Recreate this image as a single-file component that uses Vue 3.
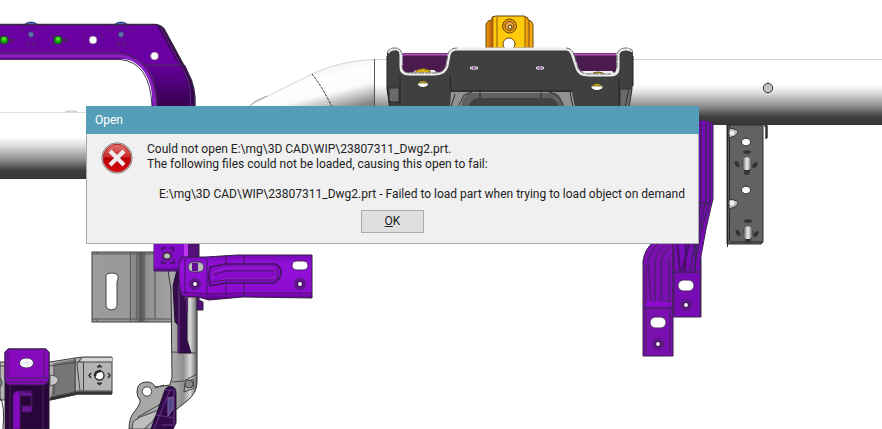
<script setup>
import { ref } from 'vue'

const open = ref(true)
const file = 'E:\\mg\\3D CAD\\WIP\\23807311_Dwg2.prt'
</script>

<template>
  <main class="viewport">
    <svg class="model" viewBox="0 0 882 429" preserveAspectRatio="xMinYMin slice" aria-hidden="true">
      <defs>
        <linearGradient id="pipe" x1="0" y1="0" x2="0" y2="1">
          <stop offset="0" stop-color="#fff" />
          <stop offset=".38" stop-color="#fff" />
          <stop offset=".5" stop-color="#dedede" />
          <stop offset=".7" stop-color="#929292" />
          <stop offset=".87" stop-color="#404040" />
          <stop offset="1" stop-color="#363636" />
        </linearGradient>
        <linearGradient id="bend" gradientUnits="userSpaceOnUse" x1="345" y1="66" x2="361" y2="128">
          <stop offset="0" stop-color="#f8f8f8" />
          <stop offset=".12" stop-color="#fff" />
          <stop offset=".35" stop-color="#fbfbfb" />
          <stop offset=".65" stop-color="#8a8a8a" />
          <stop offset="1" stop-color="#444" />
        </linearGradient>
        <linearGradient id="tube" x1="0" y1="0" x2="1" y2="0">
          <stop offset="0" stop-color="#a5a5a5" />
          <stop offset=".65" stop-color="#aaa" />
          <stop offset=".8" stop-color="#909090" />
          <stop offset=".9" stop-color="#d8d8d8" />
          <stop offset="1" stop-color="#666" />
        </linearGradient>
        <linearGradient id="plate" x1="0" y1="0" x2="1" y2="0">
          <stop offset="0" stop-color="#9b9b9b" />
          <stop offset=".45" stop-color="#999" />
          <stop offset=".57" stop-color="#818181" />
          <stop offset=".61" stop-color="#525252" />
          <stop offset=".68" stop-color="#919191" />
          <stop offset="1" stop-color="#a4a4a4" />
        </linearGradient>
        <linearGradient id="leg" x1="0" y1="0" x2="0" y2="1">
          <stop offset="0" stop-color="#65009a" />
          <stop offset="1" stop-color="#35004d" />
        </linearGradient>
        <linearGradient id="arm" x1="0" y1="0" x2="0" y2="1">
          <stop offset="0" stop-color="#740bb5" />
          <stop offset=".2" stop-color="#9310d8" />
          <stop offset=".85" stop-color="#8c0bd0" />
          <stop offset="1" stop-color="#480069" />
        </linearGradient>
        <linearGradient id="orange" x1="0" y1="0" x2="1" y2="0">
          <stop offset="0" stop-color="#f2a20b" />
          <stop offset=".13" stop-color="#bd5b11" />
          <stop offset=".18" stop-color="#ffc90b" />
          <stop offset=".8" stop-color="#ffcb0d" />
          <stop offset=".9" stop-color="#e58d0b" />
          <stop offset="1" stop-color="#ffba10" />
        </linearGradient>
        <linearGradient id="stud" x1="0" y1="0" x2="1" y2="0">
          <stop offset="0" stop-color="#777" />
          <stop offset=".5" stop-color="#eee" />
          <stop offset="1" stop-color="#777" />
        </linearGradient>
        <g id="countersink">
          <circle r="5.5" fill="#7110a4" stroke="#4a2368" />
          <circle r="3.6" fill="#48155e" />
          <circle r="1.9" fill="#fff" />
        </g>
        <g id="stud-mount">
          <ellipse cx="0" cy="-16" rx="4" ry="1.8" fill="#333" />
          <ellipse cx="-10" cy="-4" rx="2" ry="3.4" transform="rotate(-32 -10 -4)" fill="#333" />
          <ellipse cx="8" cy="-3" rx="2" ry="3.4" transform="rotate(38 8 -3)" fill="#333" />
          <circle cy="-5" r="5.5" fill="#4d4d4d" />
          <rect x="-4" y="-11" width="8" height="14" rx="3" fill="url(#stud)" stroke="#555" stroke-width=".6" />
          <rect x="-3" y="2" width="6" height="5" rx="2" fill="#3b3b3b" />
          <path d="M-3 2Q0 5 4 1" fill="none" stroke="#222" />
        </g>
      </defs>

      <!-- cross-car beam -->
      <rect x="0" y="112" width="240" height="67" fill="url(#pipe)" />
      <path d="M0 112.500H86" fill="none" stroke="#ddd" />
      <path d="M65 112L69 111H74L77 112" fill="none" stroke="#bbb" />
      <path d="M246 108L264 98L314 73Q345 59 382 59V125H246Z" fill="url(#bend)" />
      <path d="M246 108L264 98L314 73Q345 59 382 59.500H882" fill="none" stroke="#d4d4d4" />
      <path d="M250 106L254 102L267 96" fill="none" stroke="#888" stroke-width=".8" />
      <path d="M312 74Q323 88 332 107" fill="none" stroke="#333" stroke-dasharray="3 1" />
      <rect x="374" y="60" width="508" height="65" fill="url(#pipe)" />
      <path d="M374.500 59V110" stroke="#555" />
      <circle cx="768" cy="88" r="4.700" fill="#c2c2c2" stroke="#333" />

      <!-- upper left purple frame -->
      <path d="M0 24H155Q161 25 164 29L188 73Q196 87 195 107H152Q154 75 137 63Q131 59 120 59H0Z" fill="#6b00a2" />
      <path d="M148 65H185Q193 79 191 107H154Q156 79 148 65Z" fill="url(#leg)" />
      <path d="M157 25Q162 26 166 32L188 73Q196 87 194 107H188Q190 86 183 72L160 31Z" fill="#35074d" />
      <path d="M161 28L185 73Q192 87 190 107" fill="none" stroke="#74229b" />
      <path d="M0 24.500H155Q161 25 164 29L188 73Q196 87 195 107" fill="none" stroke="#372842" stroke-width="1.500" />
      <path d="M0 56H121Q153 61 155 106" fill="none" stroke="#8a22bd" stroke-width="3" />
      <path d="M0 53H121Q157 59 157 106M0 59.500H120Q150 62 152 106M145 65H180" fill="none" stroke="#443053" />
      <g v-for="x in [31, 121]" :key="x">
        <path :d="`M${x - 6} 24Q${x} 20 ${x + 6} 24`" fill="#5063ad" stroke="#293c77" />
        <path :d="`M${x - 10} 32Q${x} 17 ${x + 10} 32M${x - 5} 43H${x + 5}M${x - 4} 46H${x + 4}`" fill="none" stroke="#513061" stroke-dasharray="4 2" />
        <circle :cx="x" cy="34.500" r="2.800" fill="#626fb6" stroke="#42366f" />
      </g>
      <g v-for="x in [4, 58]" :key="x">
        <path :d="`M${x - 6} 35L${x - 2} 38M${x - 6} 44L${x - 2} 42M${x + 5} 39L${x + 9} 40L${x + 5} 42`" stroke="#532061" fill="none" stroke-width="2" />
        <circle :cx="x" cy="40" r="4" fill="#14a20c" stroke="#174d19" />
        <circle :cx="x" cy="39" r="2" fill="#52dc2b" />
      </g>
      <circle cx="93" cy="40" r="4" fill="#fff" stroke="#604172" stroke-width=".6" />
      <circle cx="154.500" cy="56" r="4" fill="#fff" stroke="#604172" stroke-width=".6" />
      <path d="M84 36V44M102 36V43" stroke="#532061" stroke-dasharray="3 2" />

      <!-- yellow clip and central bracket -->
      <path d="M486 48V25Q487 20 492 20V17L496 16H524L528 18V20Q533 21 533 26V48Z" fill="url(#orange)" stroke="#63430c" />
      <path d="M492 20V48M497 17V48M525 17V48M529 21V48" stroke="#8b5813" fill="none" />
      <circle cx="509.500" cy="26" r="7" fill="#e69d08" stroke="#66450d" />
      <circle cx="509.500" cy="26" r="4.500" fill="#f4a24b" stroke="#654816" />
      <circle cx="510" cy="27" r="2" fill="#fff0ad" stroke="#513600" />
      <circle cx="509" cy="44" r="6" fill="#fff" stroke="#664811" />
      <path d="M400 53H449V76H400ZM572 53H620V77H572Z" fill="#4b1b50" />
      <path d="M402 54.500H448M573 54.500H620" stroke="#ae52b4" stroke-width="2" />
      <path d="M411 74L416 70H434L439 74ZM579 76V72L584 71H612L616 75Z" fill="#eee" />
      <path d="M415 73L417 70Q423 67 429 70L432 74ZM590 75Q598 69 606 75Z" fill="#d6ac19" stroke="#6b5513" />
      <path d="M387 53Q388 48 394 48Q401 48 401 54V67Q401 74 409 74H435Q445 74 447 66L449 54Q450 48 457 48H566Q571 48 573 55L577 68Q579 75 589 75H611Q618 75 618 68V54Q619 48 626 48Q633 48 633 54V85L629 107H389L387 91Z" fill="#404040" />
      <path d="M388 53Q389 49 394 49Q401 48 401 55V67Q401 74 409 74H435Q445 74 447 66L449 55Q450 49 457 49H566Q571 49 573 56L577 68Q579 75 589 75H611Q618 75 618 68V54Q619 49 626 49Q632 49 632 52" fill="none" stroke="#eee" stroke-width="3" stroke-linejoin="round" />
      <path d="M387 54Q388 48 394 48Q402 48 402 55M402 65Q402 73 409 73H435Q444 73 446 66L448 54Q450 48 457 48M566 48Q572 48 574 55L578 68Q580 74 589 74H611M617 68V54Q619 48 626 48Q633 48 633 54" fill="none" stroke="#383838" stroke-width=".7" stroke-dasharray="6 1" />
      <path d="M389 88H399V102H389ZM620 89H632L629 107H620Z" fill="#6a6a6a" stroke="#323232" />
      <path d="M451 92H572L575 107H450Z" fill="#929292" />
      <path d="M461 107Q463 93 472 93H555Q561 94 563 107Z" fill="#606060" />
      <path d="M468 107Q470 100 478 98H549Q557 99 559 107Z" fill="#424242" />
      <path d="M451 107L455 94M458 107L464 95L472 92M549 92Q560 94 564 107M570 92L573 107M389 102L400 103M480 92V98M541 92V98M625 107L629 89" fill="none" stroke="#2d2d2d" />
      <path d="M387 56V89L390 106M400 76V105M450 76L451 91H572M619 78V105M633 56V86" stroke="#232323" fill="none" />
      <g v-for="x in [474, 540]" :key="x">
        <ellipse :cx="x" cy="68" rx="4.500" ry="2.200" fill="#efefef" stroke="#252525" stroke-width=".7" />
        <path :d="`M${x} 66V70M${x - 3} 68H${x + 3}`" stroke="#823f91" />
      </g>
      <ellipse cx="423" cy="84" rx="5" ry="3" fill="#fff" />
      <path d="M418 83Q423 79 428 83Z" fill="#ceb51d" stroke="#574b12" stroke-width=".7" />
      <ellipse cx="597" cy="87" rx="5.500" ry="3" fill="#fff" />
      <path d="M592 86Q597 81 602 86Z" fill="#ceb51d" stroke="#574b12" stroke-width=".7" />

      <!-- right purple support -->
      <path d="M695 122L704 120L713 123V199L711 207L706 229L701 256V317H673V240Z" fill="#780bb5" stroke="#342744" />
      <path d="M701 123V204L690 271M706 123V200L696 241L695 271M710 123V200L701 231L694 270M699 203H710M673 272H700" fill="none" stroke="#40225d" stroke-width="1.500" />
      <path d="M677 240L680 271M686 240L685 271M694 226L682 271" fill="none" stroke="#471067" stroke-width="2" />
      <path d="M673 240L654 242Q645 248 643 261V356H673Z" fill="#7910af" stroke="#352145" />
      <path d="M659 243Q650 250 648 262L651 300M667 243Q657 250 655 262V301M672 245Q662 253 661 263V300M669 259V303M646 264V354M670 303V354M674 248V315M700 258V314M643 308H671M644 301L649 304L671 301" fill="none" stroke="#44215b" />
      <path d="M646 302H671V306H646Z" fill="#8f0bd0" />
      <rect x="678" y="280" width="16" height="11" rx="5.500" fill="#fff" stroke="#48265c" />
      <rect x="650" y="317" width="16" height="11" rx="5.500" fill="#fff" stroke="#48265c" />
      <use href="#countersink" x="686" y="305" />
      <use href="#countersink" x="658" y="344" />

      <!-- right vertical mounting plate -->
      <path d="M727 125H763V242L761 244H727Z" fill="#626262" stroke="#303030" />
      <path d="M727.500 125V247M729.500 125V241M730 242H762" stroke="#272727" fill="none" />
      <path d="M764 126H767V138M766 125V139" fill="none" stroke="#333" stroke-width="1.500" />
      <path d="M729 128Q739 129 738 133Q735 137 729 138ZM729 199Q739 200 738 204Q735 208 729 209Z" fill="#b9b9b9" stroke="#313131" />
      <circle cx="732" cy="133" r="2.500" fill="#ededed" />
      <circle cx="732" cy="203" r="2.500" fill="#ededed" />
      <ellipse cx="746" cy="142" rx="4.500" ry="3.800" fill="#fff" stroke="#333" />
      <ellipse cx="746" cy="190" rx="4.500" ry="3.800" fill="#fff" stroke="#333" />
      <use href="#stud-mount" x="747" y="168" />
      <use href="#stud-mount" x="748" y="237" />

      <!-- lower center assembly -->
      <rect x="92" y="252" width="80" height="70" fill="url(#plate)" stroke="#3d3d3d" />
      <path d="M92 254H171M92 319H171M97 252V254M97 319V322M130.500 252V321M137 254V319M144 254V319M155 254V319" fill="none" stroke="#555" />
      <path d="M106 277Q105 273 112 273Q119 273 118 279L117 282V306Q116 310 111 310Q106 309 106 305V282Z" fill="#fff" stroke="#444" />
      <path d="M168 270L171 290L172 377L170 385L155 387Q153 382 147 382Q137 382 137 392Q137 397 140 400Q141 403 135 411Q129 417 129 429H152L187 401Q197 393 197 382V260H168Z" fill="url(#tube)" stroke="#333" />
      <path d="M172 352L196 353M172 382L184 381L197 374M185 383L193 379L194 388L184 392ZM143 429L138 417L171 398M155 388L164 385" fill="none" stroke="#444" />
      <circle cx="189" cy="384" r="4" fill="#888" stroke="#444" />
      <path d="M133 422L140 417L159 410L153 421L144 429H132Z" fill="#bfbfbf" stroke="#444" />
      <circle cx="147" cy="391.500" r="4.700" fill="#fff" stroke="#444" />
      <path d="M177 270L173 286L175 322L178 325V353H191L187 340V298H184V270Z" fill="#340c4d" stroke="#21132b" />
      <path d="M179 285V353M184 299H187V313" fill="none" stroke="#562071" stroke-width="2" />
      <path d="M154 244H199V300L203 302V310H197V296H180V271H154Z" fill="#55107a" stroke="#311d43" />
      <path d="M154 244H188V268L180 270H154Z" fill="#830bc9" />
      <path d="M184 244H188V257H184Z" fill="#bd36ed" />
      <path d="M154 268H180V271H154Z" fill="#5d0b8c" />
      <path d="M162 251V248H166M169 248H173V252M162 260V263H166M170 263H174V259" fill="none" stroke="#3e165c" stroke-width="1.500" />
      <ellipse cx="167" cy="256" rx="4" ry="3.500" fill="#bbb" stroke="#432453" stroke-width="2" />
      <path d="M181 257H206L237 255H312V298L243 297L209 300L198 297H183Q178 292 179 263Z" fill="url(#arm)" stroke="#351e45" />
      <path d="M185 259V294M207 259V295M244 255V296M226 256V295M180 292L207 294L244 293H311" fill="none" stroke="#461265" />
      <path d="M210 267L225 264H275Q281 266 281 273Q280 282 272 283H226L210 286Q208 277 210 267Z" fill="#8909cc" stroke="#3f1758" stroke-width="1.500" />
      <path d="M213 272L226 268H272Q277 270 276 276L272 279H226L213 282Z" fill="none" stroke="#982bc9" />
      <path d="M213 275L226 271H274M211 282L226 280H274M277 268V280" fill="none" stroke="#451762" />
      <rect x="188" y="262" width="16" height="10" rx="5" fill="#bbb" stroke="#452759" />
      <rect x="192" y="263" width="6" height="8" fill="#620c91" />
      <use href="#countersink" x="195" y="284" />
      <use href="#countersink" x="300" y="284" />
      <rect x="292" y="261" width="16" height="9" rx="4.500" fill="#fff" stroke="#452759" />
      <path d="M151 429L160 404L165 390Q167 385 173 387Q176 388 176 394V423L173 429Z" fill="#32094a" stroke="#231330" />
      <path d="M154 429L170 390M165 390H174V425H161M156 415L174 418" fill="none" stroke="#6a3887" />
      <path d="M168 398L173 397V409L168 416Z" fill="#534687" stroke="#8168a5" />

      <!-- lower left assembly -->
      <path d="M0 362H50L75 358L84 357H112V394H78L50 400H0Z" fill="#b4b4b4" stroke="#3c3c3c" />
      <path d="M55 363L76 359V391L51 397Z" fill="#777" />
      <path d="M82 358H112V362H82Z" fill="#d4d4d4" />
      <path d="M0 366H50L77 362H112M54 363V394M75 358V393M82 357L77 364L80 391M83.500 362V391M51 397L78 391H112" fill="none" stroke="#474747" />
      <path d="M50 399L78 393H112" fill="none" stroke="#333" stroke-width="3" />
      <path d="M50 375L55 376Q61 379 56 384L50 386Z" fill="#c6c6c6" stroke="#555" />
      <path d="M0 378Q4 383 0 387M0 398Q5 404 3 429" fill="none" stroke="#333" />
      <circle cx="99.500" cy="375.500" r="4.500" fill="#fff" stroke="#333" stroke-width="1.500" />
      <path d="M95 376Q95 371 101 371" fill="none" stroke="#292929" stroke-width="2.500" />
      <path d="M97 367L99.500 365L102 367ZM97 383L99.500 385L102 383Z" fill="#333" stroke="#333" />
      <path d="M91 373L89 375.500L91 378M108 373L110 375.500L108 378" fill="none" stroke="#333" stroke-width="1.500" />
      <path d="M5 352L8 349H46L49 352V429H5Z" fill="#28063a" stroke="#241630" />
      <path d="M5 352L8 349H46L49 352V379Q48 384 44 385H8Q5 383 5 378Z" fill="#8609bd" stroke="#391c48" />
      <path d="M8 351V378M44 351V378M6 378H48M6 382H48M10 386V429M43 386V429" fill="none" stroke="#4a205e" />
      <path d="M13 429V397Q13 391 19 391H31L29 395H20V429Z" fill="#8509c0" stroke="#4a1763" />
      <path d="M20 392H32V412H22V406H31V396H20Z" fill="#6d169b" stroke="#411251" />
      <ellipse cx="26.500" cy="363" rx="7" ry="5" fill="#fff" stroke="#57346b" />
      <path d="M21 363H32M27 359V367" stroke="#ddd" />
    </svg>

    <section v-if="open" class="dialog" role="alertdialog" aria-labelledby="title" aria-describedby="message">
      <h1 id="title" class="title">Open</h1>
      <div class="body">
        <svg class="error" viewBox="0 0 32 32" aria-hidden="true">
          <defs>
            <linearGradient id="red" x1="0" y1="0" x2="0" y2="1">
              <stop offset="0" stop-color="#dd7774" />
              <stop offset=".46" stop-color="#c82d2b" />
              <stop offset=".5" stop-color="#b60005" />
              <stop offset="1" stop-color="#d90c13" />
            </linearGradient>
          </defs>
          <circle cx="16" cy="16" r="15.200" fill="#e5dede" stroke="#7c7777" stroke-width=".9" />
          <circle cx="16" cy="16" r="13.800" fill="url(#red)" stroke="#b51b1b" />
          <path d="M10.500 10.500L21.500 21.500M21.500 10.500L10.500 21.500" stroke="#ededed" stroke-width="4.200" stroke-linecap="square" />
        </svg>
        <div id="message" class="message">
          <p>Could not open {{ file }}.</p>
          <p>The following files could not be loaded, causing this open to fail:</p>
          <p class="detail">{{ file }} - Failed to load part when trying to load object on demand</p>
        </div>
      </div>
      <button class="ok" type="button" accesskey="o" @click="open = false"><u>O</u>K</button>
    </section>
  </main>
</template>

<style>
body {
  margin: 0;
}
</style>

<style scoped>
.viewport {
  position: relative;
  min-height: 100vh;
  overflow: hidden;
  background: #fff;
  font-family: Roboto, "Noto Sans", sans-serif;
  font-size: 12px;
  line-height: 15px;
  color: #222;
}

.model {
  display: block;
  width: 100%;
  height: 100vh;
}

.dialog {
  position: absolute;
  top: 106px;
  left: 86px;
  box-sizing: border-box;
  display: flex;
  flex-direction: column;
  width: 613px;
  max-width: calc(100% - 86px);
  padding-bottom: 10px;
  background: #f0f0f0;
  border: 1px solid #a5a9aa;
  border-top: 0;
}

.title {
  margin: 0 -1px;
  padding: 0 9px;
  background: #549fb7;
  color: #fff;
  font-size: 12px;
  font-weight: 400;
  line-height: 28px;
}

.body {
  display: flex;
  gap: 14px;
  padding: 8px 0 0 14px;
}

.error {
  flex: none;
  width: 32px;
  height: 32px;
}

.message p {
  margin: 0;
  white-space: nowrap;
}

.message .detail {
  padding: 15px 0 0 12px;
}

.ok {
  align-self: center;
  width: 63px;
  height: 23px;
  margin-top: 8px;
  padding: 0;
  border: 1px solid #acacac;
  background: #dfdfdf;
  color: #222;
  font: inherit;
}
</style>
